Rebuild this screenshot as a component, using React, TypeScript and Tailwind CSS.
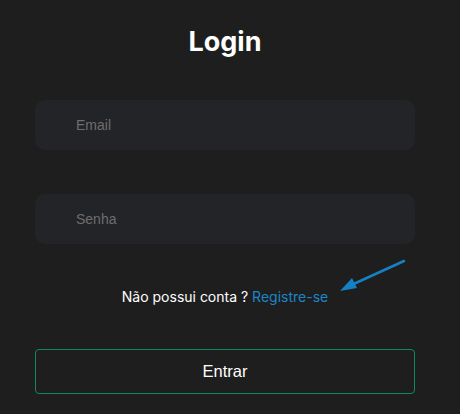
export default function App() {
  return (
    <div className="min-h-[414px] w-full bg-[#1e1e1e]" style={{ fontFamily: "Inter, 'Liberation Sans', sans-serif" }}>
      <div className="mx-[35px] flex w-[380px] flex-col">
        <h1 className="mt-[24px] h-[36px] text-center text-[27px] font-bold leading-[36px] text-white">Login</h1>

        <input
          type="text"
          placeholder="Email"
          className="mt-[40px] h-[50px] w-full rounded-[10px] bg-[#232427] pl-[41px] text-[14px] text-white outline-none placeholder:text-[#6e6e6e]"
          style={{ fontFamily: "'Liberation Sans', Arial, sans-serif" }}
        />
        <input
          type="password"
          placeholder="Senha"
          className="mt-[44px] h-[50px] w-full rounded-[10px] bg-[#232427] pl-[41px] text-[14px] text-white outline-none placeholder:text-[#6e6e6e]"
          style={{ fontFamily: "'Liberation Sans', Arial, sans-serif" }}
        />

        <div className="relative mt-[43px] text-center text-[14px] leading-[20px] text-white">
          Não possui conta ? <a className="text-[#1b86c6]">Registre-se</a>
          <svg className="absolute left-[296px] top-[-30px]" width="80" height="40" viewBox="0 0 80 40">
            <line x1="73" y1="4" x2="16" y2="30" stroke="#1580c4" strokeWidth="2.5" strokeLinecap="round" />
            <polygon points="9,34 21,21 26,31" fill="#1580c4" />
          </svg>
        </div>

        <button
          className="mt-[42px] h-[45px] w-full rounded-[4px] border border-[#0e8a5c] text-[16.5px] text-white"
          style={{ fontFamily: "'Liberation Sans', Arial, sans-serif" }}
        >
          Entrar
        </button>
      </div>
    </div>
  );
}
